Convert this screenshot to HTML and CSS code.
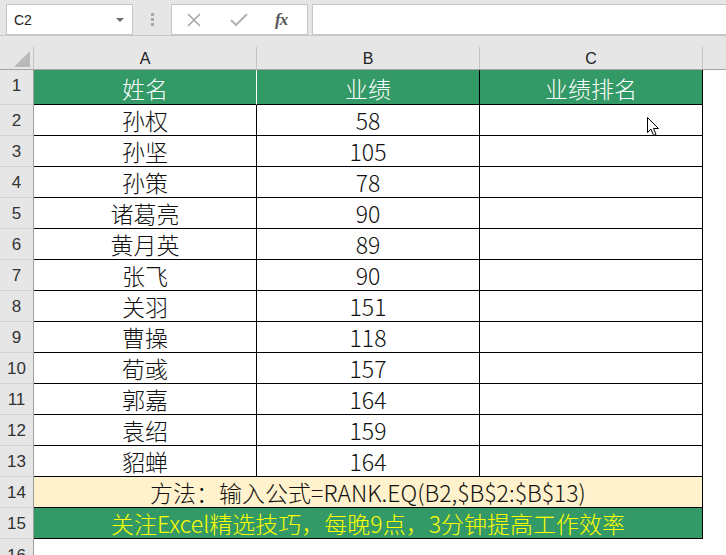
FILE: index.html
```html
<!DOCTYPE html>
<html lang="zh-CN">
<head>
    <meta charset="UTF-8">
    <title>业绩排名</title>
    <link rel="stylesheet" href="styles.css">
</head>
<body>
    <div class="formula-bar">
        <div class="name-box">
            <span>C2</span>
            <span class="caret"></span>
        </div>
        <div class="dots"><i></i><i></i><i></i></div>
        <div class="fx-buttons">
            <svg class="btn-x" width="14" height="14" viewBox="0 0 14 14"><path d="M1 1 L13 13 M13 1 L1 13" stroke="#a6a6a6" stroke-width="1.6" fill="none"/></svg>
            <svg class="btn-ok" width="18" height="14" viewBox="0 0 18 14"><path d="M1 7 L6 12 L17 1" stroke="#b3b3b3" stroke-width="2" fill="none"/></svg>
            <span class="fx">fx</span>
        </div>
        <div class="formula-input"></div>
    </div>

    <div class="sheet">
        <div class="col-heads">
            <div class="corner"><span class="tri"></span></div>
            <div class="ch">A</div>
            <div class="ch">B</div>
            <div class="ch">C</div>
            <div class="ch-rest"></div>
        </div>

        <div class="row title">
            <div class="rh">1</div>
            <div class="cell c-a">姓名</div>
            <div class="cell">业绩</div>
            <div class="cell">业绩排名</div>
        </div>
        <div class="row"><div class="rh">2</div><div class="cell">孙权</div><div class="cell">58</div><div class="cell"></div></div>
        <div class="row"><div class="rh">3</div><div class="cell">孙坚</div><div class="cell">105</div><div class="cell"></div></div>
        <div class="row"><div class="rh">4</div><div class="cell">孙策</div><div class="cell">78</div><div class="cell"></div></div>
        <div class="row"><div class="rh">5</div><div class="cell">诸葛亮</div><div class="cell">90</div><div class="cell"></div></div>
        <div class="row"><div class="rh">6</div><div class="cell">黄月英</div><div class="cell">89</div><div class="cell"></div></div>
        <div class="row"><div class="rh">7</div><div class="cell">张飞</div><div class="cell">90</div><div class="cell"></div></div>
        <div class="row"><div class="rh">8</div><div class="cell">关羽</div><div class="cell">151</div><div class="cell"></div></div>
        <div class="row"><div class="rh">9</div><div class="cell">曹操</div><div class="cell">118</div><div class="cell"></div></div>
        <div class="row"><div class="rh">10</div><div class="cell">荀彧</div><div class="cell">157</div><div class="cell"></div></div>
        <div class="row"><div class="rh">11</div><div class="cell">郭嘉</div><div class="cell">164</div><div class="cell"></div></div>
        <div class="row"><div class="rh">12</div><div class="cell">袁绍</div><div class="cell">159</div><div class="cell"></div></div>
        <div class="row"><div class="rh">13</div><div class="cell">貂蝉</div><div class="cell">164</div><div class="cell"></div></div>
        <div class="row method">
            <div class="rh">14</div>
            <div class="cell wide">方法：输入公式=RANK.EQ(B2,$B$2:$B$13)</div>
        </div>
        <div class="row promo">
            <div class="rh">15</div>
            <div class="cell wide">关注Excel精选技巧，每晚9点，3分钟提高工作效率</div>
        </div>
        <div class="row last">
            <div class="rh">16</div>
        </div>
    </div>

    <svg class="cursor" width="13" height="20" viewBox="0 0 13 20">
        <path d="M0.5 0.5 L0.5 15.5 L4 12.2 L6.6 18.5 L9 17.5 L6.5 11.5 L11.5 11.5 Z" fill="#fff" stroke="#000" stroke-width="1"/>
    </svg>
</body>
</html>
```

FILE: styles.css
```css
* {
    box-sizing: border-box;
    margin: 0;
    padding: 0;
}

body {
    width: 726px;
    height: 555px;
    overflow: hidden;
    position: relative;
    background: #fff;
    font-family: "Noto Sans CJK SC", "Noto Sans", sans-serif;
}

/* formula bar */
.formula-bar {
    height: 36px;
    background: #e6e6e6;
    border-bottom: 1px solid #c8c8c8;
    display: flex;
    align-items: flex-start;
    padding: 4px 0 0 6px;
}

.name-box {
    width: 127px;
    height: 31px;
    background: #fff;
    border: 1px solid #c6c6c6;
    display: flex;
    align-items: center;
    justify-content: space-between;
    padding: 0 8px 0 7px;
    font-family: "Liberation Sans", sans-serif;
    font-size: 14px;
    color: #222;
}

.caret {
    width: 0;
    height: 0;
    border-left: 4px solid transparent;
    border-right: 4px solid transparent;
    border-top: 4px solid #6b6b6b;
}

.dots {
    width: 38px;
    height: 31px;
    display: flex;
    flex-direction: column;
    align-items: center;
    justify-content: center;
    gap: 2px;
}

.dots i {
    width: 3px;
    height: 3px;
    background: #a8a8a8;
}

.fx-buttons {
    width: 137px;
    height: 31px;
    background: #fff;
    border: 1px solid #c6c6c6;
    display: flex;
    align-items: center;
    padding-left: 15px;
}

.btn-x {
    margin-right: 29px;
}

.btn-ok {
    margin-right: 27px;
}

.fx {
    font-family: "Liberation Serif", serif;
    font-style: italic;
    font-weight: bold;
    font-size: 17px;
    color: #555;
    letter-spacing: -1px;
}

.formula-input {
    flex: 1;
    height: 31px;
    margin-left: 4px;
    background: #fff;
    border: 1px solid #c6c6c6;
    border-right: none;
}

/* grid */
.sheet {
    background: #e6e6e6;
    padding-top: 11px;
}

.col-heads {
    display: flex;
    height: 23px;
    border-bottom: 1px solid #a6a6a6;
    font-family: "Liberation Sans", sans-serif;
    font-size: 16px;
    color: #222;
}

.corner {
    width: 34px;
    border-right: 1px solid #c4c4c4;
    position: relative;
}

.tri {
    position: absolute;
    right: 3px;
    bottom: 2px;
    width: 0;
    height: 0;
    border-left: 16px solid transparent;
    border-bottom: 16px solid #b9b9b9;
}

.ch {
    width: 223px;
    border-right: 1px solid #c4c4c4;
    text-align: center;
    line-height: 24px;
}

.ch-rest {
    flex: 1;
}

.row {
    display: flex;
    height: 31px;
    background: #fff;
}

.rh {
    width: 34px;
    flex-shrink: 0;
    background: #e6e6e6;
    border-right: 1px solid #9e9e9e;
    border-bottom: 1px solid #d4d4d4;
    text-align: center;
    font-family: "Liberation Sans", sans-serif;
    font-size: 17px;
    line-height: 32px;
    color: #333;
}

.cell {
    width: 223px;
    flex-shrink: 0;
    border-right: 1px solid #000;
    border-bottom: 1px solid #000;
    text-align: center;
    font-size: 23px;
    font-weight: 300;
    line-height: 31px;
    color: #111;
    white-space: nowrap;
}

.title {
    height: 35px;
}

.title .cell {
    background: #339966;
    color: #fff;
    line-height: 36px;
}

.title .c-a {
    border-right-color: #fff;
}

.wide {
    width: 669px;
}

.method .wide {
    background: #fff2cc;
}

.promo .wide {
    background: #339966;
    color: #ffff00;
}

.last {
    height: 20px;
}

.last .rh {
    border-bottom: none;
    line-height: 34px;
}

.cursor {
    position: absolute;
    left: 647px;
    top: 117px;
}
```
